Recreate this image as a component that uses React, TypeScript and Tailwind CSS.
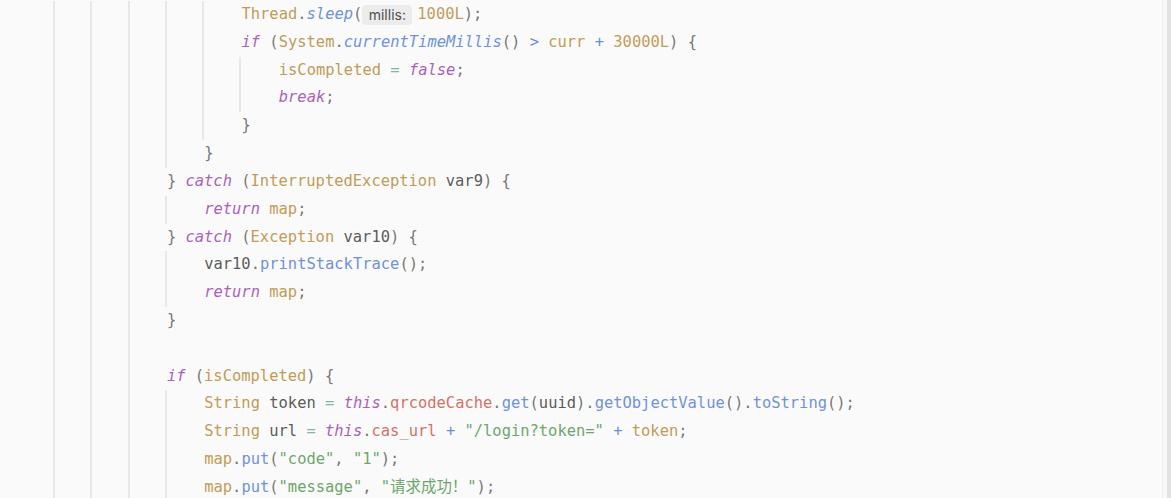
import React from "react";

const K = "text-[#a962b8] italic";
const T = "text-[#c09c58]";
const M = "text-[#6f92d8]";
const MI = "text-[#6f92d8] italic";
const F = "text-[#cf7369]";
const S = "text-[#6ea66c]";
const P = "text-[#777777]";
const D = "text-[#5c5c5c]";
const O = "text-[#6590d6]";
const E = "text-[#84b3aa]";
const N = "text-[#c29d5a]";

type Tok = [string, string] | "HINT";
type Line = { indent: number; toks: Tok[] };

const lines: Line[] = [
  { indent: 6, toks: [["Thread", T], [".", P], ["sleep", MI], ["(", P], "HINT", ["1000L", N], [");", P]] },
  {
    indent: 6,
    toks: [
      ["if", K], [" (", P], ["System", T], [".", P], ["currentTimeMillis", MI], ["()", P], [" ", P], [">", O], [" ", P],
      ["curr", T], [" ", P], ["+", O], [" ", P], ["30000L", N], [") {", P],
    ],
  },
  { indent: 7, toks: [["isCompleted", T], [" ", P], ["=", E], [" ", P], ["false", K], [";", P]] },
  { indent: 7, toks: [["break", K], [";", P]] },
  { indent: 6, toks: [["}", P]] },
  { indent: 5, toks: [["}", P]] },
  { indent: 4, toks: [["} ", P], ["catch", K], [" (", P], ["InterruptedException", T], [" ", P], ["var9", D], [") {", P]] },
  { indent: 5, toks: [["return", K], [" ", P], ["map", T], [";", P]] },
  { indent: 4, toks: [["} ", P], ["catch", K], [" (", P], ["Exception", T], [" ", P], ["var10", D], [") {", P]] },
  { indent: 5, toks: [["var10", D], [".", P], ["printStackTrace", M], ["();", P]] },
  { indent: 5, toks: [["return", K], [" ", P], ["map", T], [";", P]] },
  { indent: 4, toks: [["}", P]] },
  { indent: 4, toks: [] },
  { indent: 4, toks: [["if", K], [" (", P], ["isCompleted", T], [") {", P]] },
  {
    indent: 5,
    toks: [
      ["String", T], [" ", P], ["token", D], [" ", P], ["=", E], [" ", P], ["this", K], [".", P], ["qrcodeCache", F], [".", P],
      ["get", M], ["(", P], ["uuid", D], [").", P], ["getObjectValue", M], ["().", P], ["toString", M], ["();", P],
    ],
  },
  {
    indent: 5,
    toks: [
      ["String", T], [" ", P], ["url", D], [" ", P], ["=", E], [" ", P], ["this", K], [".", P], ["cas_url", F], [" ", P],
      ["+", O], [" ", P], ["\"/login?token=\"", S], [" ", P], ["+", O], [" ", P], ["token", T], [";", P],
    ],
  },
  { indent: 5, toks: [["map", T], [".", P], ["put", M], ["(", P], ["\"code\"", S], [", ", P], ["\"1\"", S], [");", P]] },
  { indent: 5, toks: [["map", T], [".", P], ["put", M], ["(", P], ["\"message\"", S], [", ", P], ["\"请求成功！\"", S], [");", P]] },
];

function CodeLine({ line }: { line: Line }) {
  const guides = Math.max(0, line.indent - 1);
  return (
    <div className="flex h-[27.82px] items-stretch">
      <div className="w-[53px] shrink-0" />
      {Array.from({ length: guides }).map((_, i) => (
        <div key={i} className="w-[37.3px] shrink-0 border-l-2 border-[#e8e8e8]" />
      ))}
      <div className="w-[2px] shrink-0" />
      <div className="flex items-center whitespace-pre">
        {line.toks.map((t, i) =>
          t === "HINT" ? (
            <span
              key={i}
              className="mr-[5px] inline-flex h-[20px] w-[50px] items-center justify-center rounded-[4px] bg-[#ececec] text-[14px] text-[#505050] not-italic"
              style={{ fontFamily: "Inter, 'Noto Sans', sans-serif" }}
            >
              millis:
            </span>
          ) : (
            <span key={i} className={t[1]}>
              {t[0]}
            </span>
          )
        )}
      </div>
    </div>
  );
}

export default function App() {
  return (
    <div className="flex h-[498px] w-[1171px] overflow-hidden bg-[#fafafa]">
      <div
        className="mt-[1px] flex-1 text-[15.45px] leading-[27.82px]"
        style={{ fontFamily: "'DejaVu Sans Mono', 'Noto Sans CJK SC', monospace" }}
      >
        {lines.map((l, i) => (
          <CodeLine key={i} line={l} />
        ))}
      </div>
      <div className="w-[1px] bg-[#efefef]" />
      <div className="w-[4px] bg-[#f8f8f8]" />
      <div className="w-[4px] bg-[#e2e2e2]" />
    </div>
  );
}
